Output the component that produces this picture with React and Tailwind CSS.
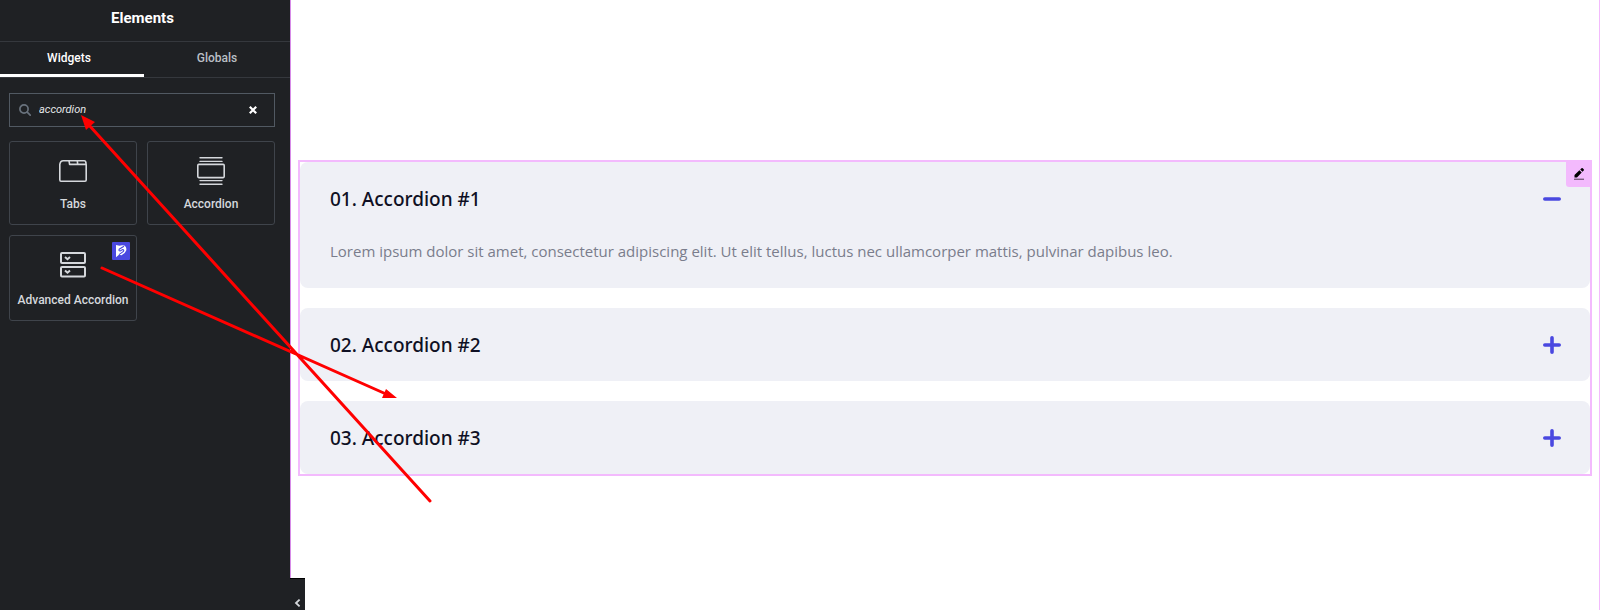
import React, { useState } from 'react'

const items = [
  {
    title: '01. Accordion #1',
    body: 'Lorem ipsum dolor sit amet, consectetur adipiscing elit. Ut elit tellus, luctus nec ullamcorper mattis, pulvinar dapibus leo.',
  },
  { title: '02. Accordion #2', body: '' },
  { title: '03. Accordion #3', body: '' },
]

function TabsIcon() {
  return (
    <svg className="w-7 h-7" viewBox="0 0 28 28" fill="none" stroke="currentColor" strokeWidth="1.6" strokeLinejoin="round">
      <path d="M.8 22.8V7.4Q1.4 3.7 4.2 3.7h21q1.6 0 1.6 1.8l.4 2.2v15.4q0 1.2-1.2 1.2H2q-1.2 0-1.2-1.5z" />
      <path d="M10 3.7l.6 3.7H27M18.3 3.7l.4 3.7" />
    </svg>
  )
}

function AccordionIcon() {
  return (
    <svg className="w-7 h-7" viewBox="0 0 28 28" fill="none" stroke="currentColor" strokeWidth="1.6" strokeLinecap="round">
      <path d="M3 .8h22M3 4.4h22M3 23.6h22M3 27.2h22" strokeWidth="1.4" />
      <rect x=".8" y="7.4" width="26.4" height="13.2" rx="1" />
    </svg>
  )
}

function AdvancedAccordionIcon() {
  return (
    <svg className="w-[30px] h-[30px]" viewBox="0 0 30 30" fill="none" stroke="currentColor" strokeWidth="2">
      <rect x="3" y="2" width="24" height="10" rx="1" />
      <rect x="3" y="16" width="24" height="9.5" rx="1" />
      <path d="M7 6l2.500 2.200L12 6M7 19.500l2.500 2.200 2.500-2.200" />
    </svg>
  )
}

function WidgetCard({ icon, label, badge }) {
  return (
    <button
      type="button"
      className="relative flex flex-col items-center gap-[11px] rounded-[3px] border border-[#3f444b] px-1 pt-[15px] pb-3 text-[12px] leading-4 font-medium text-[#d5d8dc]"
    >
      {icon}
      <span className="whitespace-nowrap">{label}</span>
      {badge}
    </button>
  )
}

function Sidebar() {
  const [query, setQuery] = useState('accordion')
  return (
    <aside className="relative w-[291px] shrink-0 border-r border-[#d78be8] bg-[#1f2124] font-['Roboto',sans-serif]">
      <header className="flex h-[42px] items-center justify-center border-b border-[#35383d] pb-[5px] pr-[5px]">
        <h1 className="text-[15px] leading-5 font-bold text-white">Elements</h1>
      </header>

      <nav className="flex h-9 border-b border-[#35383d] text-[12px] leading-4 font-medium">
        <button type="button" className="w-36 shrink-0 border-b-3 border-white pr-[6px] text-white">Widgets</button>
        <button type="button" className="flex-1 pb-[3px] text-[#babfc5]">Globals</button>
      </nav>

      <div className="flex flex-col gap-[14px] pl-[9px] pr-[15px] pt-[15px]">
        <label className="flex h-[34px] items-center gap-2 border border-[#515962] pl-[9px] pr-[17px]">
          <svg className="w-3 h-3 shrink-0 text-[#69727d]" viewBox="0 0 12 12" fill="none" stroke="currentColor" strokeWidth="1.7" strokeLinecap="round">
            <circle cx="5" cy="5" r="4.1" />
            <path d="M8.2 8.2l3 3" />
          </svg>
          <input
            type="text"
            aria-label="Search Widget"
            value={query}
            onChange={(e) => setQuery(e.target.value)}
            className="min-w-0 flex-1 bg-transparent text-[11px] italic text-[#e6e8ea] outline-none"
          />
          <button type="button" aria-label="Clear" onClick={() => setQuery('')} className="text-white">
            <svg className="w-2 h-2" viewBox="0 0 8 8" stroke="currentColor" strokeWidth="2.2">
              <path d="M.8.8l6.4 6.4M7.2.8L.8 7.2" />
            </svg>
          </button>
        </label>

        <div className="grid grid-cols-2 gap-[10px]">
          <WidgetCard icon={<TabsIcon />} label="Tabs" />
          <WidgetCard icon={<AccordionIcon />} label="Accordion" />
          <WidgetCard
            icon={<AdvancedAccordionIcon />}
            label="Advanced Accordion"
            badge={
              <svg className="absolute right-[6px] top-[6px] w-[18px] h-[18px]" viewBox="0 0 18 18" fill="none">
                <rect width="18" height="18" rx="1" fill="#4a48e0" />
                <path d="M4 3l3.500.8Q10 2.600 12.400 3.600 15 5.200 14.200 8.600 13 12 9.500 13.200L7 12.800 4 15.200z" fill="#fff" />
                <path d="M12 4.200L7.200 7.200q-.8 1.600 1 1.800l2.400-1.400q1.800.2.800 1.800L7 12.600" stroke="#4a48e0" strokeWidth="1.1" />
              </svg>
            }
          />
        </div>
      </div>

      <button
        type="button"
        aria-label="Hide panel"
        className="absolute bottom-0 left-[290px] flex h-8 w-[15px] items-end justify-center border-t border-black bg-[#1f2124] pb-[3px] text-[#d5d8dc]"
      >
        <svg className="w-2 h-2" viewBox="0 0 8 8" fill="none" stroke="currentColor" strokeWidth="1.8">
          <path d="M5.600.6L2 4l3.600 3.400" />
        </svg>
      </button>
    </aside>
  )
}

function AccordionItem({ item, open, onToggle }) {
  return (
    <section className="rounded-lg bg-[#eff0f6] pl-[30px] pr-[29px]">
      <h2>
        <button type="button" aria-expanded={open} onClick={onToggle} className="flex h-[73px] w-full items-center justify-between text-left">
          <span className="text-[19px] leading-6 font-medium text-[#0f1024]">{item.title}</span>
          <svg className="w-[18px] h-[18px] text-[#4a48e0]" viewBox="0 0 18 18" fill="none" stroke="currentColor" strokeWidth="3.6" strokeLinecap="round">
            <path d={open ? 'M1.8 9h14.4' : 'M1.8 9h14.4M9 1.8v14.4'} />
          </svg>
        </button>
      </h2>
      {open && item.body && (
        <p className="pt-1 pb-[25px] font-['Open_Sans',sans-serif] text-[15px] leading-6 text-[#7a7d8c]">{item.body}</p>
      )}
    </section>
  )
}

// red pointers drawn over the editor
function Arrows() {
  return (
    <svg className="pointer-events-none absolute left-0 top-0 w-[440px] h-[510px]" viewBox="0 0 440 510" fill="none" stroke="#ff0000" strokeWidth="3" strokeLinecap="round">
      <path d="M430 501L88 124M102 268L386 394" />
      <path d="M81 115l5 15 9-8zM397 398l-11-9-4 9z" fill="#ff0000" stroke="none" />
    </svg>
  )
}

function App() {
  const [openIndex, setOpenIndex] = useState(0)
  return (
    <div className="relative flex min-h-screen bg-white">
      <Sidebar />
      <main className="flex-1 border-r border-[#f3bafd] pl-[7px] pr-[7px] pt-40 font-['Noto_Sans',sans-serif]">
        <div className="relative flex flex-col gap-5 border-2 border-[#f3bafd]">
          {items.map((item, i) => (
            <AccordionItem
              key={item.title}
              item={item}
              open={i === openIndex}
              onToggle={() => setOpenIndex(i === openIndex ? -1 : i)}
            />
          ))}
          <button type="button" aria-label="Edit" className="absolute -right-[2px] -top-[2px] flex h-[27px] w-[26px] items-center justify-center rounded-bl-[3px] bg-[#f3bafd] text-black">
            <svg className="w-3 h-3" viewBox="0 0 12 12" fill="currentColor">
              <path d="M1.500 9.500V7L6.400 2.200l2.300 2.300L4 9.500zM7.200 1.400L8.500.3q.6-.5 1.200 0l1 1q.5.6 0 1.200L9.500 3.700z" />
              <path d="M1 10.700h10v1H1z" opacity=".7" />
            </svg>
          </button>
        </div>
      </main>
      <Arrows />
    </div>
  )
}

export default App
